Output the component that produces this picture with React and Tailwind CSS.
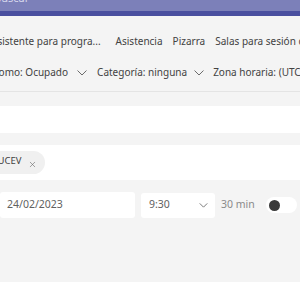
import { X } from 'lucide-react';

function Chevron({ className }) {
  return (
    <svg className={className} viewBox="0 0 10 6" fill="none" stroke="currentColor" strokeWidth="1" strokeLinecap="round" strokeLinejoin="round">
      <polyline points="0.8,0.8 5,5 9.2,0.8" />
    </svg>
  );
}

export default function App() {
  return (
    <div className="w-[300px] h-[300px] overflow-hidden bg-white text-[#424242]" style={{ fontFamily: '"Noto Sans", "Open Sans", sans-serif' }}>
      {/* Top bar */}
      <div className="h-[11px] bg-[#7c80b9] overflow-hidden relative">
        <span className="absolute left-[-6px] top-[-10px] text-[11px] text-[#d6d7ec]">Buscar</span>
      </div>
      <div className="h-[5px] bg-[#4a4f9f]" />

      {/* Toolbar */}
      <div className="bg-[#f4f4f4] flex flex-col overflow-hidden">
        <div className="flex items-center h-[44px] pt-[6px] text-[10px] whitespace-nowrap">
          <span className="ml-[-9px] shrink-0">Asistente para progra...</span>
          <span className="ml-[15px] shrink-0">Asistencia</span>
          <span className="ml-[10px] shrink-0">Pizarra</span>
          <span className="ml-[10px] shrink-0">Salas para sesión de grupo</span>
        </div>
        <div className="flex items-center h-[32px] pb-[6px] text-[10px] whitespace-nowrap border-b border-[#e4e4e4]">
          <span className="ml-[-46px] shrink-0">Mostrar como: Ocupado</span>
          <Chevron className="w-[10px] h-[6px] ml-[9px] shrink-0 text-[#6b6b6b]" />
          <span className="ml-[10px] shrink-0">Categoría: ninguna</span>
          <Chevron className="w-[10px] h-[6px] ml-[7px] shrink-0 text-[#6b6b6b]" />
          <span className="ml-[9px] shrink-0">Zona horaria: (UTC+01:00)</span>
        </div>
        <div className="h-[14px]" />
      </div>

      {/* Title row */}
      <div className="h-[27px] bg-white" />
      <div className="h-[12px] bg-[#f4f4f4]" />

      {/* Attendees */}
      <div className="h-[35px] bg-white flex items-center">
        <div className="flex items-center h-[23px] ml-[-21px] pl-[8px] pr-[8px] rounded-full bg-[#f0f0f0] text-[9.5px] shrink-0 whitespace-nowrap">
          <span className="mb-[3px]">SSUCEV</span>
          <X className="w-[9px] h-[9px] ml-[7px] mt-[3px] text-[#616161]" strokeWidth={1.5} />
        </div>
      </div>

      {/* Date row */}
      <div className="h-[102px] bg-[#f4f4f4] pt-[12px]">
        <div className="flex items-center h-[26px] whitespace-nowrap">
          <div className="w-[135px] h-[26px] shrink-0 bg-white rounded-[3px] flex items-center text-[10.5px] text-[#616161] pl-[7px]">
            24/02/2023
          </div>
          <div className="w-[74px] h-[25px] ml-[6px] shrink-0 bg-white rounded-[3px] flex items-center justify-between text-[10.5px] text-[#616161] pl-[8px] pr-[7px]">
            <span>9:30</span>
            <Chevron className="w-[9px] h-[5px] text-[#616161]" />
          </div>
          <span className="ml-[6px] shrink-0 text-[10.5px] text-[#8a8a8a]">30 min</span>
          <div className="ml-[11px] w-[31px] h-[16px] shrink-0 rounded-full bg-white flex items-center pl-[3px]">
            <div className="w-[11px] h-[11px] rounded-full bg-[#3a3a3a]" />
          </div>
        </div>
      </div>
      <div className="h-[18px] bg-white" />
    </div>
  );
}
